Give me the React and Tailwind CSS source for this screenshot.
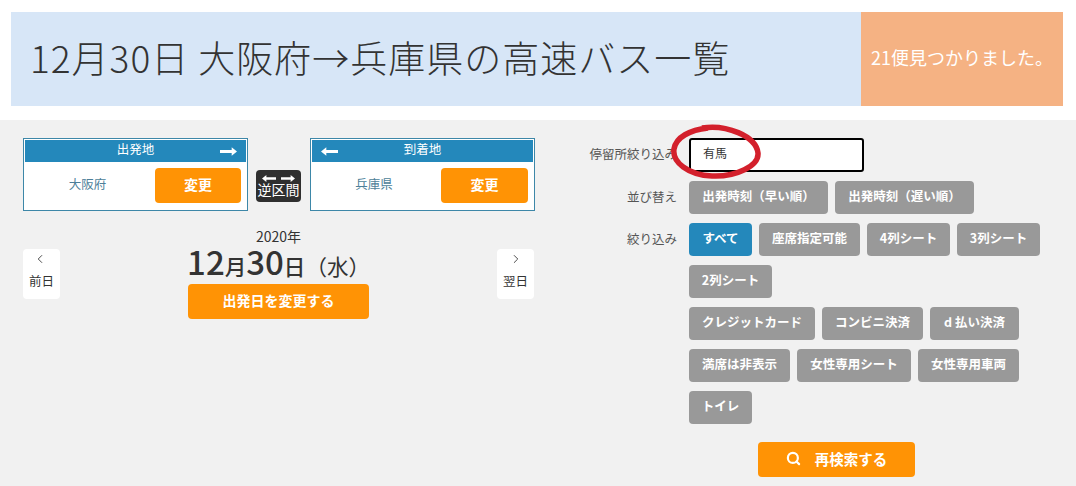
import { ChevronLeft, ChevronRight, Search } from "lucide-react"

function Arrow({ dir = "right", className = "" }) {
    return (
        <svg viewBox="0 0 16 8" className={className} fill="white">
            {dir === "right"
                ? <path d="M0 2.5h11V0l5 4-5 4V5.5H0z" />
                : <path d="M16 2.5H5V0L0 4l5 4V5.5h11z" />}
        </svg>
    )
}

function PlaceBox({ title, place, dir, placeClass, buttonClass }) {
    return (
        <div className="w-[225px] shrink-0 h-[73px] border border-[#3d87a8] bg-white p-px">
            <div className="relative h-[22px] bg-[#2488bb] text-white text-[12.5px] leading-[18px] text-center">
                {title}
                <Arrow dir={dir} className={`absolute top-[7px] w-[17px] h-[9px] ${dir === "right" ? "right-[9px]" : "left-[9px]"}`} />
            </div>
            <div className="flex items-center pt-[6px]">
                <div className={`text-[12.5px] leading-[18px] pb-[4px] text-[#4d7f99] text-center ${placeClass}`}>{place}</div>
                <button className={`ml-auto h-[35px] pb-[2px] rounded bg-[#ff9305] text-white text-[14px] font-bold ${buttonClass}`}>変更</button>
            </div>
        </div>
    )
}

function DayButton({ label, next }) {
    const Icon = next ? ChevronRight : ChevronLeft
    return (
        <button className="w-[37px] h-[50px] rounded bg-white flex flex-col items-center text-[#333] text-[12.5px] leading-[18px]">
            <Icon size={14} strokeWidth={1.5} className={`mt-[3px] ${next ? "ml-[1px]" : "-ml-[4px]"}`} />
            <span className="mt-[6px]">{label}</span>
        </button>
    )
}

function Tag({ children, active, w }) {
    return (
        <button className={`h-[33px] pb-[3px] rounded text-white text-[12.5px] font-bold whitespace-nowrap ${w} ${active ? "bg-[#2488bb]" : "bg-[#999999]"}`}>
            {children}
        </button>
    )
}

function TagLine({ children }) {
    return <div className="flex gap-x-[7px]">{children}</div>
}

function Row({ label, children }) {
    return (
        <div className="flex">
            <div className="w-[90px] mr-[12px] h-[33px] leading-[31px] text-right text-[12.5px] text-[#555] whitespace-nowrap">{label}</div>
            <div className="flex flex-col gap-y-[9px]">{children}</div>
        </div>
    )
}

export default function App() {
    return (
        <div className="w-[1076px] h-[486px] overflow-hidden bg-white font-['Noto_Sans_CJK_JP','Noto_Sans',sans-serif]">
            {/* title */}
            <div className="flex ml-[11px] mr-[13px] pt-[12px] h-[106px]">
                <h1 className="flex-1 bg-[#d7e6f7] pl-[19px] leading-[90px] text-[37px] font-light text-[#333] tracking-[1px]">
                    12月30日 大阪府→兵庫県の高速バス一覧
                </h1>
                <div className="w-[202px] bg-[#f5b283] text-white text-[18px] leading-[90px] text-center whitespace-nowrap">21便見つかりました。</div>
            </div>

            <div className="relative mt-[14px] h-[366px] bg-[#f1f1f1] flex pl-[23px] pt-[18px]">
                {/* left side */}
                <div className="w-[511px]">
                    <div className="flex items-start">
                        <PlaceBox title="出発地" place="大阪府" dir="right" placeClass="w-[125px]" buttonClass="w-[86px] mr-[5px]" />
                        <button className="shrink-0 ml-[8px] mr-[9px] mt-[32px] w-[45px] h-[32px] rounded bg-[#2f2f2f] text-white text-[14px] leading-[15px] flex flex-col items-center justify-center">
                            <span className="flex gap-[3px]">
                                <Arrow dir="left" className="w-[16px] h-[7px]" />
                                <Arrow className="w-[16px] h-[7px]" />
                            </span>
                            逆区間
                        </button>
                        <PlaceBox title="到着地" place="兵庫県" dir="left" placeClass="w-[124px]" buttonClass="w-[87px] mr-[5px]" />
                    </div>
                    <div className="flex justify-between mt-[38px] items-start">
                        <DayButton label="前日" />
                        <div className="flex flex-col items-center -mt-[21px] text-[#333]">
                            <div className="text-[14px] leading-[16px]">2020年</div>
                            <div className="h-[36px] leading-[36px] font-medium whitespace-nowrap text-[#333] -mt-[1px]">
                                <span className="text-[33px]">12</span>
                                <span className="text-[21.5px]">月</span>
                                <span className="text-[33px]">30</span>
                                <span className="text-[21.5px]">日</span>
                                <span className="text-[21.5px] font-normal">（水）</span>
                            </div>
                            <button className="mt-[5px] w-[181px] h-[35px] pb-[2px] rounded bg-[#ff9305] text-white text-[14px] font-bold">出発日を変更する</button>
                        </div>
                        <DayButton label="翌日" next />
                    </div>
                </div>

                {/* right side */}
                <div className="ml-[53px] w-[462px] flex flex-col gap-y-[9px]">
                    <Row label="停留所絞り込み">
                        <input
                            readOnly
                            value="有馬"
                            className="w-[175px] h-[34px] rounded-[3px] border-2 border-black bg-white pl-[12px] pb-[6px] text-[12px] text-[#333] outline-none"
                        />
                    </Row>
                    <Row label="並び替え">
                        <TagLine>
                            <Tag w="w-[139px]">出発時刻（早い順）</Tag>
                            <Tag w="w-[139px]">出発時刻（遅い順）</Tag>
                        </TagLine>
                    </Row>
                    <Row label="絞り込み">
                        <TagLine>
                            <Tag active w="w-[63px]">すべて</Tag>
                            <Tag w="w-[101px]">座席指定可能</Tag>
                            <Tag w="w-[83px]">4列シート</Tag>
                            <Tag w="w-[83px]">3列シート</Tag>
                        </TagLine>
                        <TagLine>
                            <Tag w="w-[83px]">2列シート</Tag>
                        </TagLine>
                        <TagLine>
                            <Tag w="w-[126px]">クレジットカード</Tag>
                            <Tag w="w-[101px]">コンビニ決済</Tag>
                            <Tag w="w-[89px]">d 払い決済</Tag>
                        </TagLine>
                        <TagLine>
                            <Tag w="w-[101px]">満席は非表示</Tag>
                            <Tag w="w-[114px]">女性専用シート</Tag>
                            <Tag w="w-[101px]">女性専用車両</Tag>
                        </TagLine>
                        <TagLine>
                            <Tag w="w-[63px]">トイレ</Tag>
                        </TagLine>
                    </Row>
                    <button className="ml-[171px] mt-[9px] w-[157px] h-[35px] pb-[2px] rounded bg-[#ff9305] text-white text-[14.5px] font-bold flex items-center justify-center gap-[14px]">
                        <Search size={15} strokeWidth={3.5} />
                        再検索する
                    </button>
                </div>

                {/* hand drawn circle on top of the input */}
                <svg viewBox="0 0 92 56" className="absolute left-[670px] top-[4px] w-[92px] h-[56px] pointer-events-none" fill="none">
                    <path
                        d="M32 4C56 0 86 12 88 29C89 42 66 53 42 52C18 51 2 38 4 25C6 13 20 6 38 4"
                        stroke="#d3202c"
                        strokeWidth="5.5"
                    />
                </svg>
            </div>
        </div>
    )
}
